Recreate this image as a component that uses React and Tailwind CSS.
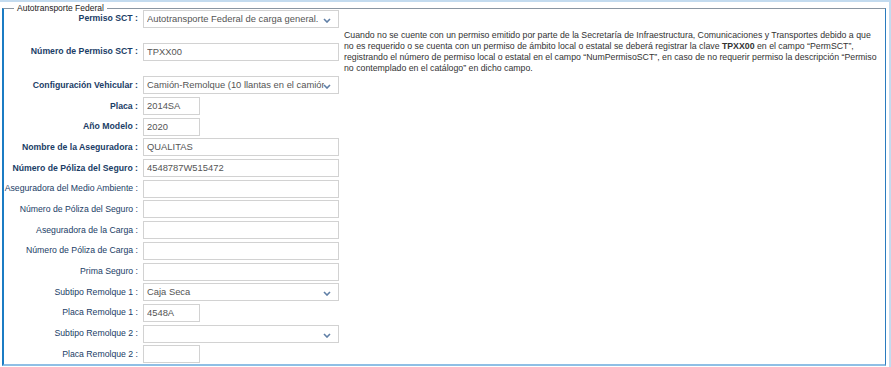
import React from "react";

const rows = [
  { label: "Permiso SCT", bold: true, type: "select", size: "long", value: "Autotransporte Federal de carga general." },
  { label: "Número de Permiso SCT", bold: true, type: "input", size: "long", value: "TPXX00", note: true },
  { label: "Configuración Vehicular", bold: true, type: "select", size: "long", value: "Camión-Remolque (10 llantas en el camión y 12 en el remolque)" },
  { label: "Placa", bold: true, type: "input", size: "short", value: "2014SA" },
  { label: "Año Modelo", bold: true, type: "input", size: "short", value: "2020" },
  { label: "Nombre de la Aseguradora", bold: true, type: "input", size: "long", value: "QUALITAS" },
  { label: "Número de Póliza del Seguro", bold: true, type: "input", size: "long", value: "4548787W515472" },
  { label: "Aseguradora del Medio Ambiente", type: "input", size: "long", value: "" },
  { label: "Número de Póliza del Seguro", type: "input", size: "long", value: "" },
  { label: "Aseguradora de la Carga", type: "input", size: "long", value: "" },
  { label: "Número de Póliza de Carga", type: "input", size: "long", value: "" },
  { label: "Prima Seguro", type: "input", size: "long", value: "" },
  { label: "Subtipo Remolque 1", type: "select", size: "long", value: "Caja Seca" },
  { label: "Placa Remolque 1", type: "input", size: "short", value: "4548A" },
  { label: "Subtipo Remolque 2", type: "select", size: "long", value: "" },
  { label: "Placa Remolque 2", type: "input", size: "short", value: "" },
];

const Chevron = () => (
  <svg width="8" height="5" viewBox="0 0 8 5" className="absolute right-[7px] top-[7px]">
    <polyline points="1,1 4,4 7,1" fill="none" stroke="#5f7fa6" strokeWidth="1.6" />
  </svg>
);

const Field = ({ row }) => {
  const width = row.size === "short" ? "w-[57px]" : "w-[196px]";
  return (
    <div
      className={`relative h-[18px] ${width} shrink-0 border border-[#d2d2d2] bg-white pl-[3px] text-[9.4px] leading-[16px] text-[#555]`}
    >
      <div className={`overflow-hidden whitespace-nowrap ${row.type === "select" ? "w-[177px]" : ""}`}>{row.value}</div>
      {row.type === "select" && <Chevron />}
    </div>
  );
};

const Note = () => (
  <p className="ml-[5px] whitespace-nowrap text-[8.75px] leading-[11px] text-[#333]">
    Cuando no se cuente con un permiso emitido por parte de la Secretaría de Infraestructura, Comunicaciones y Transportes debido a que
    <br />
    no es requerido o se cuenta con un permiso de ámbito local o estatal se deberá registrar la clave <b>TPXX00</b> en el campo “PermSCT”,
    <br />
    registrando el número de permiso local o estatal en el campo “NumPermisoSCT”, en caso de no requerir permiso la descripción “Permiso
    <br />
    no contemplado en el catálogo” en dicho campo.
  </p>
);

const App = () => {
  return (
    <div className="w-[891px] h-[367px] bg-white border-t-2 border-r-2 border-[#c3dbef] font-['Liberation_Sans',Arial,sans-serif] overflow-hidden">
      <div className="relative ml-[2px] mt-[6px] w-[884px] h-[358px] border-t border-t-[#8a96a2] border-l-2 border-l-[#1b7cc4] border-r border-r-[#2a7bbf] border-b-2 border-b-[#8fbfe5]">
        {/* legend sits over the top border */}
        <span className="absolute left-[10px] -top-[6px] bg-white px-[3px] text-[8.5px] leading-[10px] text-[#222]">
          Autotransporte Federal
        </span>

        <div>
          {rows.map((row, i) => (
            <div
              key={i}
              className={`flex items-center ${i === 0 ? "h-[19px]" : i === 1 ? "h-[47px]" : "h-[20.7px]"}`}
            >
              <div
                className={`w-[135px] shrink-0 pr-[1px] text-right whitespace-nowrap text-[8.7px] text-[#1a3d66] ${row.bold ? "font-bold" : ""}`}
              >
                {row.label} :
              </div>
              <div className="ml-[4px]">
                <Field row={row} />
              </div>
              {row.note && <Note />}
            </div>
          ))}
        </div>
      </div>
    </div>
  );
};

export default App;
